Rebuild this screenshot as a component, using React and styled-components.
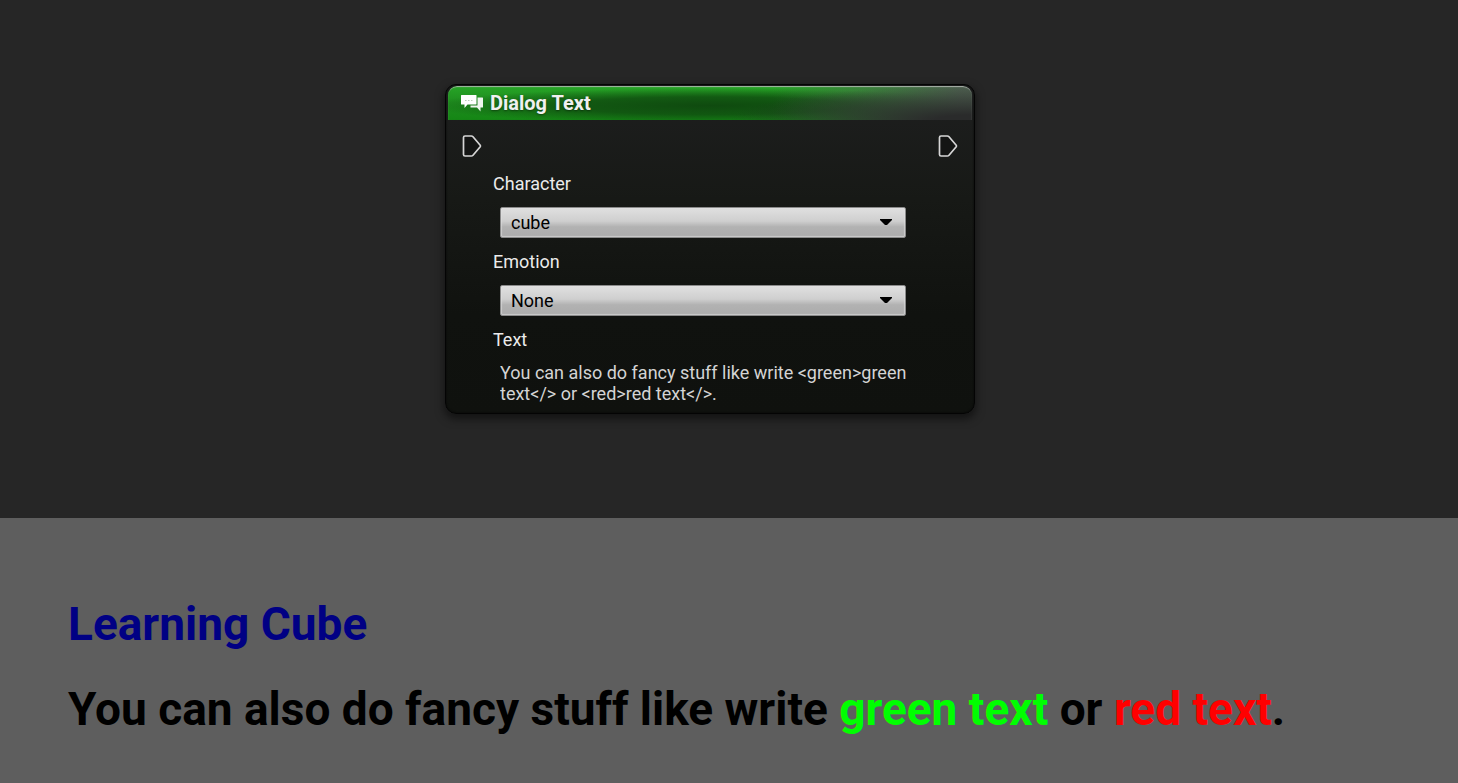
import React from "react";
import styled, { createGlobalStyle } from "styled-components";

const GlobalStyle = createGlobalStyle`
  * { box-sizing: border-box; }
  body {
    margin: 0;
    background: #262626;
    font-family: Roboto, "Liberation Sans", sans-serif;
  }
`;

const Page = styled.div`
  min-height: 100vh;
  display: flex;
  flex-direction: column;
`;

const Canvas = styled.main`
  display: flex;
  justify-content: center;
  padding: 84px 38px 104px 0;
  background: #262626;
`;

const Node = styled.section`
  width: 100%;
  max-width: 530px;
  padding: 1px 2px 3px;
  border: 1px solid #040404;
  border-radius: 11px;
  background: linear-gradient(#1e1f1f, #171916 35%, #10120f 70%, #0f110e);
  box-shadow:
    inset 0 0 2px #050505,
    0 4px 8px 1px rgba(0, 0, 0, 0.5);
`;

const NodeHeader = styled.header`
  height: 34px;
  display: flex;
  align-items: center;
  gap: 6px;
  padding: 0 12px;
  border-radius: 9px 9px 0 0;
  background:
    radial-gradient(ellipse 46% 100% at 100% 100%, #2a2b2b 15%, rgba(42, 44, 43, 0.6) 50%, transparent),
    linear-gradient(90deg, transparent 62%, rgba(80, 92, 82, 0.95) 98%),
    radial-gradient(ellipse 54% 52% at 50% 58%, #0f4a0f, rgba(15, 76, 15, 0.8) 50%, transparent),
    linear-gradient(#27a527, #1e8c1e 50%, #158615);
  box-shadow:
    inset 0 2px 1px -1px rgba(180, 185, 180, 0.9),
    inset 1px 0 1px rgba(150, 170, 150, 0.1),
    inset -1px 0 1px rgba(150, 150, 150, 0.1);
`;

const NodeTitle = styled.h1`
  margin: 0;
  font-size: 20px;
  font-weight: 700;
  line-height: 24px;
  color: #f0f0f0;
  text-shadow: 0 1px 2px rgba(0, 0, 0, 0.4);
`;

const PinRow = styled.div`
  display: flex;
  justify-content: space-between;
  padding: 14px 14px 0;
`;

const PinButton = styled.button`
  display: flex;
  padding: 0;
  border: 0;
  background: none;
`;

const Fields = styled.div`
  display: flex;
  flex-direction: column;
  padding: 14px 56px 6px 45px;
`;

const FieldLabel = styled.label`
  font-size: 18px;
  line-height: 24px;
  color: #ebebeb;
`;

const SelectWrap = styled.div`
  position: relative;
  margin: 11px 10px 12px 7px;
`;

const Select = styled.select`
  display: block;
  appearance: none;
  width: 100%;
  height: 31px;
  padding: 0 30px 0 10px;
  border: 1px solid #8b8b8b;
  border-radius: 2px;
  background: linear-gradient(#e0e0e0, #cfcfcf 45%, #b2b2b2 65%, #acacac);
  box-shadow: inset 0 0 1px 1px rgba(225, 225, 225, 0.6);
  font: 400 18px/24px Roboto, "Liberation Sans", sans-serif;
  color: #000;
`;

const Caret = styled.svg`
  position: absolute;
  top: 11px;
  right: 14px;
  pointer-events: none;
`;

const DialogInput = styled.textarea`
  display: block;
  height: 42px;
  margin: 10px 0 0 7px;
  padding: 0;
  border: 0;
  background: none;
  resize: none;
  overflow: hidden;
  font: 400 18px/21px Roboto, "Liberation Sans", sans-serif;
  color: #d4d4d4;
`;

const Preview = styled.section`
  flex: 1;
  display: flex;
  flex-direction: column;
  gap: 29px;
  padding: 78px 68px 0;
  background: #5e5e5e;
`;

const PreviewLine = styled.p`
  margin: 0;
  font-size: 46px;
  font-weight: 700;
  line-height: 56px;
  color: ${({ $color }) => $color || "#000"};
`;

const Tint = styled.span`
  color: ${({ $color }) => $color};
`;

const ChatIcon = () => (
  <svg width="24" height="20" viewBox="0 0 24 20" aria-hidden="true">
    <path d="M17.5 4.5H22.5Q23 4.5 23 5V14Q23 14.5 22.5 14.5H20.5V18.5L17 14.5H10.5V12.5H17Q17.5 12.5 17.5 12Z" fill="#eef5ee" />
    <path d="M1.5 2H16Q16.5 2 16.5 2.5V11Q16.5 11.5 16 11.5H7.5L4.5 15V11.5H1.5Q1 11.5 1 11V2.5Q1 2 1.5 2Z" fill="#fff" />
    <path d="M5 7.5h1.5M8 7.5h1.5M11 7.5h1.5" stroke="#b9cfb9" strokeWidth="1" />
  </svg>
);

const Pin = ({ label }) => (
  <PinButton type="button" aria-label={label}>
    <svg width="20" height="24" viewBox="0 0 20 24" aria-hidden="true">
      <path
        d="M3 2H9.3Q10.3 2 11 2.8L18.2 11.2Q18.8 12 18.2 12.8L11 21.2Q10.3 22 9.3 22H3Q1.5 22 1.5 20.5V3.5Q1.5 2 3 2Z"
        fill="#141514"
        stroke="#d6d6d6"
        strokeWidth="1.7"
      />
    </svg>
  </PinButton>
);

const SelectField = ({ id, label, options }) => (
  <>
    <FieldLabel htmlFor={id}>{label}</FieldLabel>
    <SelectWrap>
      <Select id={id}>
        {options.map((option) => (
          <option key={option}>{option}</option>
        ))}
      </Select>
      <Caret width="12" height="8" viewBox="0 0 12 8" aria-hidden="true">
        <path d="M0 1H12V2L7 7H5L0 2Z" fill="#000" />
      </Caret>
    </SelectWrap>
  </>
);

export default function App() {
  return (
    <Page>
      <GlobalStyle />
      <Canvas>
        <Node>
          <NodeHeader>
            <ChatIcon />
            <NodeTitle>Dialog Text</NodeTitle>
          </NodeHeader>
          <PinRow>
            <Pin label="Input" />
            <Pin label="Output" />
          </PinRow>
          <Fields>
            <SelectField id="character" label="Character" options={["cube"]} />
            <SelectField id="emotion" label="Emotion" options={["None"]} />
            <FieldLabel htmlFor="text">Text</FieldLabel>
            <DialogInput
              id="text"
              rows={2}
              spellCheck={false}
              defaultValue="You can also do fancy stuff like write <green>green text</> or <red>red text</>."
            />
          </Fields>
        </Node>
      </Canvas>
      <Preview>
        <PreviewLine $color="#000084">Learning Cube</PreviewLine>
        <PreviewLine>
          You can also do fancy stuff like write <Tint $color="#00ff00">green text</Tint> or{" "}
          <Tint $color="#ff0000">red text</Tint>.
        </PreviewLine>
      </Preview>
    </Page>
  );
}
